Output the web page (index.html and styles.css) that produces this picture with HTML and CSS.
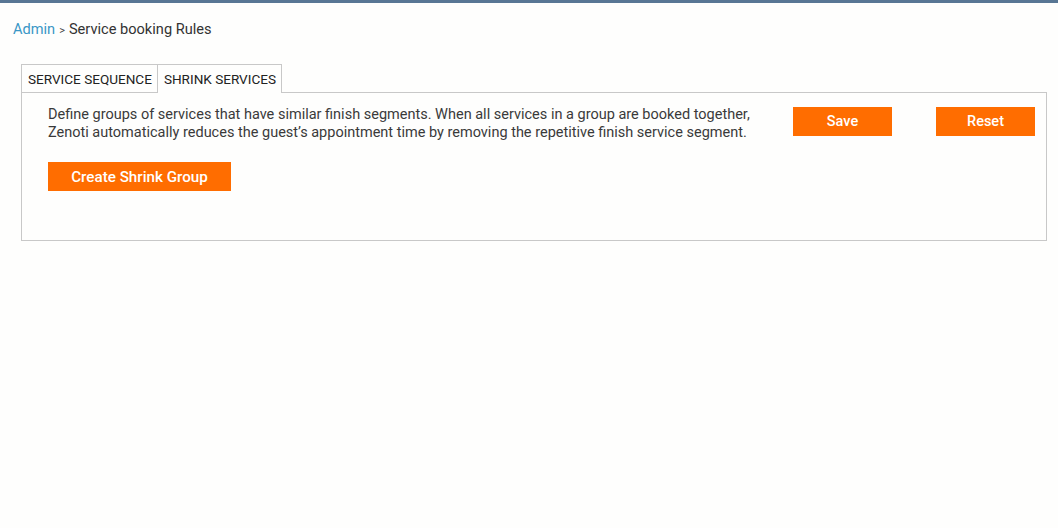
FILE: index.html
```html
<!DOCTYPE html>
<html>
<head>
<meta charset="utf-8">
<link rel="stylesheet" href="styles.css">
</head>
<body>
<div class="topbar"></div>
<div class="page">
  <div class="crumbs"><a class="crumb-link">Admin</a><span class="sep">&gt;</span><span class="crumb-current">Service booking Rules</span></div>
  <div class="tabs">
    <div class="tab">SERVICE SEQUENCE</div>
    <div class="tab active">SHRINK SERVICES</div>
  </div>
  <div class="panel">
    <div class="row">
      <p class="desc">Define groups of services that have similar finish segments. When all services in a group are booked together,<br>Zenoti automatically reduces the guest’s appointment time by removing the repetitive finish service segment.</p>
      <div class="actions">
        <button class="btn btn-sm">Save</button>
        <button class="btn btn-sm">Reset</button>
      </div>
    </div>
    <button class="btn btn-create">Create Shrink Group</button>
  </div>
</div>
</body>
</html>
```
FILE: styles.css
```css
html, body {
  margin: 0;
  padding: 0;
  background: #fefefd;
  font-family: Roboto, "Liberation Sans", sans-serif;
  color: #333;
}
.topbar {
  height: 3px;
  background: #587694;
}
.page {
  padding: 0 11px 0 21px;
}
.crumbs {
  margin-left: -8px;
  padding-top: 18px;
  font-size: 14.6px;
  line-height: 16px;
  height: 16px;
}
.crumb-link {
  color: #3a97c6;
}
.sep {
  font-size: 11px;
  margin: 0 4px 0 4px;
  color: #444;
}
.crumb-current {
  color: #333;
}
.tabs {
  display: flex;
  margin-top: 27px;
  height: 28px;
}
.tab {
  box-sizing: border-box;
  height: 28px;
  padding: 0 5px 0 6px;
  font-size: 13.55px;
  line-height: 28px;
  color: #222;
  border: 1px solid #c8c8c8;
  border-bottom: none;
  background: #fefefd;
}
.tab + .tab {
  border-left: none;
}
.tab.active {
  height: 29px;
  position: relative;
  z-index: 1;
}
.panel {
  box-sizing: border-box;
  height: 149px;
  border: 1px solid #c8c8c8;
  padding: 13px 11px 0 26px;
}
.row {
  display: flex;
  align-items: flex-start;
}
.desc {
  margin: 0;
  font-size: 14.5px;
  line-height: 18px;
  color: #3a3a3a;
  flex: 1;
  white-space: nowrap;
}
.actions {
  display: flex;
  gap: 44px;
  padding-top: 1px;
}
.btn {
  border: none;
  background: #ff6d00;
  color: #fff;
  font-family: Roboto, "Liberation Sans", sans-serif;
  font-weight: 500;
  font-size: 14.5px;
  padding: 0;
  cursor: pointer;
}
.btn-sm {
  width: 99px;
  height: 29px;
}
.btn-create {
  margin-top: 20px;
  width: 183px;
  height: 29px;
  font-size: 15.2px;
}
```
